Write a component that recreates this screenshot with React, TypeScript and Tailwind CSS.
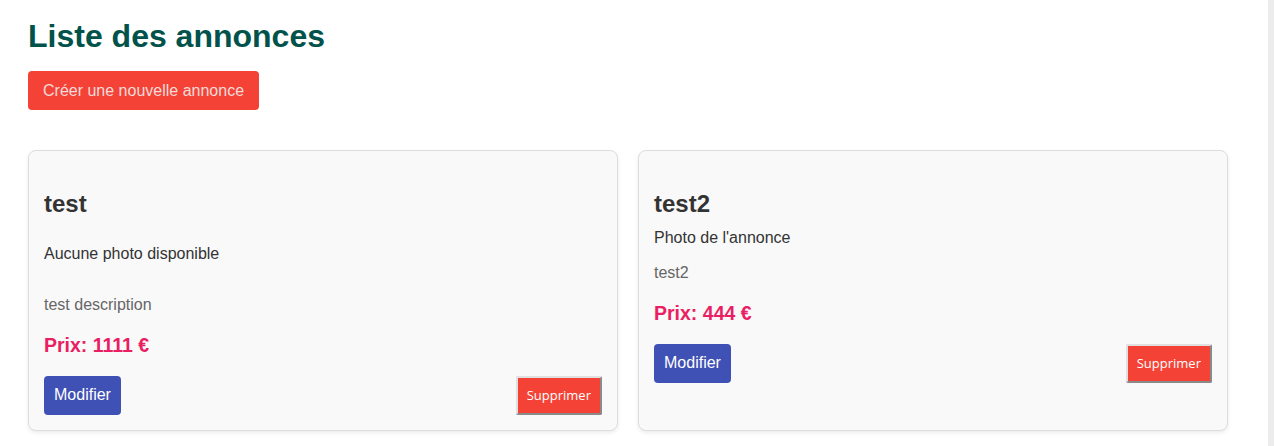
import React from 'react';

type Annonce = {
    id: number;
    titre: string;
    photo: string | null;
    description: string;
    prix: number;
};

const annonces: Annonce[] = [
    { id: 1, titre: "test", photo: null, description: "test description", prix: 1111 },
    { id: 2, titre: "test2", photo: "Photo de l'annonce", description: "test2", prix: 444 },
];

const AnnonceCard: React.FC<{ annonce: Annonce }> = ({ annonce }) => {
    const hasPhoto = annonce.photo !== null;

    return (
        <div className="flex flex-col rounded-[8px] border border-[#dddddd] bg-[#f9f9f9] p-[15px] shadow-[0_2px_4px_rgba(0,0,0,0.08)]">
            <h3 className="mt-[24px] text-[24px] leading-[28px] font-bold text-[#333333]">{annonce.titre}</h3>
            {hasPhoto ? (
                <p className="mt-[11px] text-[16px] leading-[18px] text-[#333333]">{annonce.photo}</p>
            ) : (
                <p className="mt-[27px] text-[16px] leading-[18px] text-[#333333]">Aucune photo disponible</p>
            )}
            <p className={(hasPhoto ? "mt-[17px]" : "mt-[33px]") + " text-[16px] leading-[18px] text-[#666666]"}>
                {annonce.description}
            </p>
            <p className="mt-[20px] text-[19.5px] leading-[23px] font-bold text-[#e91e63]">
                Prix: {annonce.prix} €
            </p>
            <div className="mt-[18px] flex items-center justify-between">
                <button className="h-[39px] rounded-[4px] bg-[#3f51b5] px-[10px] text-[16px] text-white">Modifier</button>
                <button className="mt-[1px] h-[39px] border-2 border-t-[#e0e0e0] border-l-[#e0e0e0] border-r-[#8a8a8a] border-b-[#8a8a8a] rounded-[2px] bg-[#f44336] px-[9px] text-[13px] text-white font-['Open_Sans',sans-serif]">
                    Supprimer
                </button>
            </div>
        </div>
    );
};

export default function App() {
    return (
        <div className="flex min-h-[446px] bg-white font-['Liberation_Sans',Arial,sans-serif]">
            <div className="flex-1 pl-[28px] pr-[40px]">
                <h1 className="mt-[18px] text-[32px] leading-[37px] font-bold text-[#00524a]">Liste des annonces</h1>
                <button className="mt-[16px] h-[39px] rounded-[4px] bg-[#f44336] px-[15px] text-[16px] text-[#f3dada]">
                    Créer une nouvelle annonce
                </button>
                <div className="mt-[40px] grid grid-cols-2 gap-[20px]">
                    {annonces.map((a) => (
                        <AnnonceCard key={a.id} annonce={a} />
                    ))}
                </div>
            </div>
            <div className="w-[6px] bg-[#ececec]" />
        </div>
    );
}
